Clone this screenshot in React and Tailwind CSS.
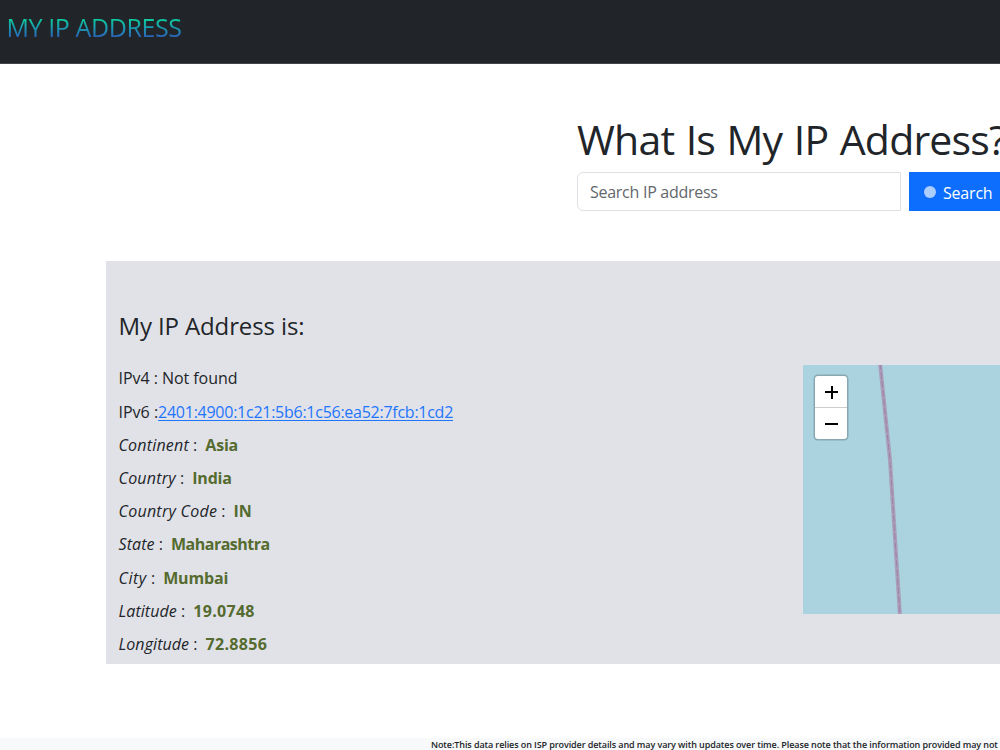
const location = [
  { label: 'Continent', value: 'Asia', labelClass: 'tracking-[0.2px]', valueClass: 'tracking-[-0.2px]' },
  { label: 'Country', value: 'India', labelClass: 'tracking-[0.22px]', valueClass: 'tracking-[-0.2px]' },
  { label: 'Country Code', value: 'IN', labelClass: 'tracking-[0.25px]', valueClass: 'tracking-normal' },
  { label: 'State', value: 'Maharashtra', labelClass: 'tracking-[0.1px]', valueClass: 'tracking-[-0.5px]' },
  { label: 'City', value: 'Mumbai', labelClass: 'tracking-[0.55px]', valueClass: 'tracking-[-0.15px]' },
  { label: 'Latitude', value: '19.0748', labelClass: 'tracking-[0.08px]', valueClass: 'tracking-[0.3px]' },
  { label: 'Longitude', value: '72.8856', labelClass: 'tracking-[0.08px]', valueClass: 'tracking-[0.3px]' },
];

const Navbar = () => (
  <nav className="h-16 shrink-0 border-b border-[#414549] bg-[#212529] pl-[6.5px] pt-[9px]">
    <a className="inline-block bg-gradient-to-b from-[#0bd39a] from-25% to-[#2b5cb8] to-80% bg-clip-text text-[25px] leading-9 tracking-[-0.4px] text-transparent">
      MY IP ADDRESS
    </a>
  </nav>
);

const SearchSection = () => (
  <section className="ml-[577px] w-[460px] shrink-0 pt-[50px]">
    <h1 className="whitespace-nowrap text-[41px] leading-[50px] tracking-[-0.8px] [word-spacing:1.6px]">
      What Is My IP Address?
    </h1>
    <div className="mt-2 flex h-[39px] gap-2">
      <input
        type="text"
        placeholder="Search IP address"
        className="w-[324px] rounded-l-md border border-[#dee2e6] bg-white px-3 pt-px text-base tracking-[-0.27px] placeholder:text-[#62676c]"
      />
      <button className="flex flex-1 items-center bg-[#0d6efd] pl-[15px] text-base tracking-[-0.2px] text-white">
        <span className="mr-[7px] h-3 w-3 rounded-full bg-[#abceff]" />
        <span className="pt-0.5">Search</span>
      </button>
    </div>
  </section>
);

const Map = () => (
  <div className="relative h-[249px] w-[197px] overflow-hidden bg-[#aad3df]">
    <svg className="block h-full w-full" viewBox="0 0 197 249" fill="none">
      <path d="M77 -2 L87 95 L97 251" stroke="#aa9fba" strokeWidth="4" />
      <path d="M77 -2 L87 95 L97 251" stroke="#a07fa5" strokeWidth="1" strokeDasharray="7 2" />
    </svg>
    <div className="absolute left-3 top-[11px] flex w-8 flex-col rounded-[3px] bg-white ring-[1.5px] ring-[#88a9b2]">
      <button className="flex h-8 items-center justify-center border-b border-[#cccccc]" aria-label="Zoom in">
        <svg className="mt-0.5 h-[13px] w-[13px]" viewBox="0 0 13 13" stroke="black" strokeWidth="2">
          <path d="M0 6h13M7 0v13" />
        </svg>
      </button>
      <button className="flex h-[31px] items-center justify-center" aria-label="Zoom out">
        <svg className="h-[13px] w-[13px]" viewBox="0 0 13 13" stroke="black" strokeWidth="2">
          <path d="M0 7h13" />
        </svg>
      </button>
    </div>
  </div>
);

const Details = () => (
  <section className="ml-[106px] mt-[50px] flex h-[402.5px] shrink-0 bg-[#e1e2e8]">
    <div className="w-[697px] pl-[12.5px] pt-[49px]">
      <h4 className="text-[24px] leading-[32px] tracking-[-0.12px]">My IP Address is:</h4>
      <div className="mt-[20.4px] flex flex-col text-base leading-[33.2px]">
        <p className="tracking-[-0.05px]">IPv4 : Not found</p>
        <p>
          IPv6 :
          <a className="tracking-[-0.26px] text-[#1f75fd] underline underline-offset-2">
            2401:4900:1c21:5b6:1c56:ea52:7fcb:1cd2
          </a>
        </p>
        {location.map(({ label, value, labelClass, valueClass }) => (
          <p key={label}>
            <i className={labelClass}>{label}</i> :<b className={`ml-2 text-[#556b2f] ${valueClass}`}>{value}</b>
          </p>
        ))}
      </div>
    </div>
    <div className="pt-[104px]">
      <Map />
    </div>
  </section>
);

const Footer = () => (
  <footer className="mt-auto h-3 shrink-0 bg-[#f8f9fa] pl-[431px]">
    <p className="whitespace-nowrap text-[9px] font-semibold leading-[14px] tracking-[-0.09px]">
      Note:This data relies on ISP provider details and may vary with updates over time. Please note that the information provided may not be accurate.
    </p>
  </footer>
);

export default function App() {
  return (
    <div className="flex h-[750px] w-[1000px] flex-col overflow-hidden bg-white font-['Open_Sans','Noto_Sans',sans-serif] text-[#212529]">
      <Navbar />
      <SearchSection />
      <Details />
      <Footer />
    </div>
  );
}
